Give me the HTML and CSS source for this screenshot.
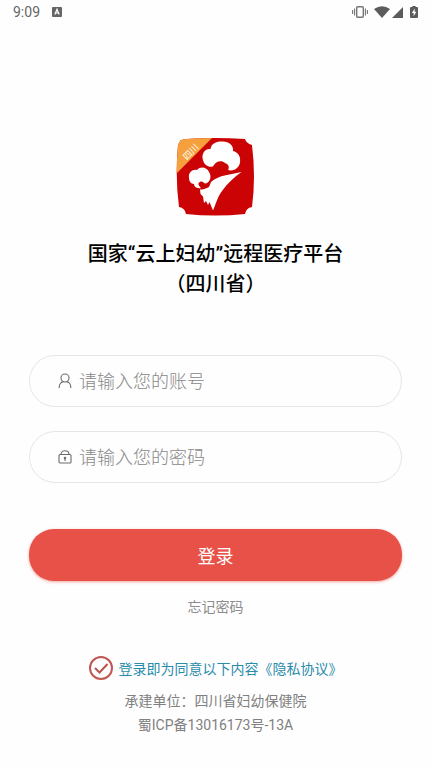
FILE: index.html
```
<!DOCTYPE html>
<html lang="zh-CN">
<head>
    <meta charset="UTF-8">
    <meta name="viewport" content="width=device-width, initial-scale=1.0">
    <title>登录</title>
    <link rel="stylesheet" href="styles.css">
</head>
<body>
    <div class="status-bar">
        <span class="time">9:09</span>
        <svg class="app-icon" width="10" height="10" viewBox="0 0 10 10">
            <rect width="10" height="10" rx="1" fill="#666"/>
            <path d="M2.8 7.6L5 2.4l2.2 5.2M3.6 6h2.8" fill="none" stroke="#fff" stroke-width="1.2"/>
        </svg>
        <div class="status-icons">
            <svg width="16" height="12" viewBox="0 0 16 12" fill="none" stroke="#777">
                <rect x="4.7" y="0.8" width="6.6" height="10.4" rx="1" stroke-width="1.4"/>
                <path d="M2.6 2.5v7M13.4 2.5v7M0.6 4v4M15.4 4v4" stroke-width="1.1"/>
            </svg>
            <svg class="wifi" width="16" height="12" viewBox="0 0 16 12">
                <path d="M0 3Q8-2.6 16 3L8 12z" fill="#5c5c5c"/>
            </svg>
            <svg width="11" height="11" viewBox="0 0 11 11">
                <path d="M11 0v11H0z" fill="#5c5c5c"/>
            </svg>
            <svg class="battery" width="8" height="12" viewBox="0 0 8 12">
                <path d="M2.4 0h3.2v1H7q1 0 1 1v9q0 1-1 1H1q-1 0-1-1V2q0-1 1-1h1.400z" fill="#5c5c5c"/>
                <path d="M4.800 2.600L1.800 7h1.800v3.200L6.400 5.800H4.600z" fill="#fff"/>
            </svg>
        </div>
    </div>

    <main class="container">
        <svg class="logo" width="80" height="80" viewBox="0 0 80 80">
            <defs>
                <clipPath id="badge">
                    <path d="M10 2Q39 0 69 2Q70 6 76 8Q80 40 76 70Q70 71 69 77Q39 80 10 77Q9 71 3 70Q-1 40 2 8Q3 5 5 3z"/>
                </clipPath>
            </defs>
            <g clip-path="url(#badge)">
                <rect width="80" height="80" fill="#cb0304"/>
                <path d="M0 0h37L0 37z" fill="#f5a03c"/>
            </g>
            <text class="logo-text" x="15" y="18" transform="rotate(-45 15 15)" text-anchor="middle">四川</text>
            <g fill="#fff">
                <path d="M27 23C25 17 29 11 34.500 12C35 6 42 4 46 4.500C52 4 58 8 57 14C62 15 65 20 64 25C64 30 58 35 52 33C54 30 52 27 49 26C46 23 40 24 38 28C36 32 28 29 27 23z"/>
                <path d="M13 41C12 35 17 32 21 33C24 29 31 30 33 35C36 40 34 44 31 46C28 48 27 43 24 45C21 46 23 49 25 51C20 52 18 49 18 47C15 47 13 44 13 41z"/>
                <path d="M24 52.500C28 53 31 51 33 50L35 45C38 42 45 39 51 38L65.500 35C58 40 52 46 46 54C41 61 40 67 37 73.500L33.500 65L32 68L30 64L28 66L27 59.500L24.500 57z"/>
            </g>
        </svg>

        <h1>国家“云上妇幼”远程医疗平台<br>（四川省）</h1>

        <form class="login-form">
            <label class="field">
                <svg width="14" height="16" viewBox="0 0 14 16" fill="none" stroke="#6b6b6b" stroke-width="1.100">
                    <circle cx="7" cy="5" r="4"/>
                    <path d="M1.200 15v-1C1.200 11 3.400 8.800 5.400 8.600M12.800 15v-1C12.800 11 10.600 8.800 8.600 8.600"/>
                </svg>
                <input type="text" name="account" placeholder="请输入您的账号" aria-label="账号">
            </label>
            <label class="field">
                <svg width="14" height="16" viewBox="0 0 14 16" fill="none" stroke="#6b6b6b" stroke-width="1.100">
                    <rect x="1" y="5.500" width="12" height="8.500" rx="1"/>
                    <path d="M3 5.500C3 0.500 11 0.500 11 5.500M7 9.500v2.500"/>
                    <circle cx="7" cy="9" r="0.700"/>
                </svg>
                <input type="password" name="password" placeholder="请输入您的密码" aria-label="密码">
            </label>
            <button type="button">登录</button>
            <a class="forgot" href="#">忘记密码</a>
            <div class="agreement">
                <span class="check">
                    <input type="checkbox" id="agree" checked>
                    <svg width="24" height="24" viewBox="0 0 24 24" fill="none">
                        <path d="M6 12l4.500 4.500L18.500 8" stroke="#b9544f" stroke-width="2"/>
                    </svg>
                </span>
                <label for="agree">登录即为同意以下内容</label><a href="#">《隐私协议》</a>
            </div>
        </form>

        <footer>
            <p>承建单位：四川省妇幼保健院</p>
            <p>蜀ICP备13016173号-13A</p>
        </footer>
    </main>
</body>
</html>
```
FILE: styles.css
```
body {
    margin: 0;
    background-color: #fefefe;
    font-family: Roboto, "Noto Sans CJK SC", sans-serif;
    font-size: 14px;
    color: #808080;
}

a {
    text-decoration: none;
}

.status-bar {
    display: flex;
    align-items: center;
    height: 24px;
    padding: 0 13px;
}

.time {
    color: #666;
}

.app-icon {
    margin-left: 12px;
}

.status-icons {
    display: flex;
    align-items: center;
    gap: 2px;
    margin-left: auto;
}

.wifi {
    margin-left: 4px;
}

.battery {
    margin-left: 5px;
}

.container {
    display: flex;
    flex-direction: column;
    align-items: center;
    padding: 113px 29px 24px;
}

.logo-text {
    font-size: 9px;
    fill: #fff;
}

h1 {
    margin: 22px 0 56px;
    font-size: 20px;
    font-weight: 500;
    line-height: 30px;
    text-align: center;
    color: #000;
}

.login-form {
    display: flex;
    flex-direction: column;
    align-items: center;
    width: 100%;
}

.field {
    display: flex;
    align-items: center;
    gap: 7px;
    box-sizing: border-box;
    width: 100%;
    height: 52px;
    margin-bottom: 24px;
    padding: 0 28px;
    border: 1px solid #e6e6e6;
    border-radius: 26px;
}

.field input {
    flex: 1;
    min-width: 0;
    padding: 0;
    border: none;
    outline: none;
    background: none;
    font: inherit;
    font-size: 18px;
    font-weight: 300;
    color: #333;
}

.field input::placeholder {
    color: #888;
}

button {
    width: 100%;
    height: 52px;
    margin-top: 22px;
    border: none;
    border-radius: 25px;
    background-color: #e85147;
    box-shadow: 0 1px 3px rgba(232, 81, 71, 0.5);
    font: inherit;
    font-size: 18px;
    color: #fff;
    cursor: pointer;
}

.forgot {
    margin-top: 16px;
    line-height: 20px;
    color: #8c8c8c;
}

.agreement {
    display: flex;
    align-items: center;
    margin-top: 39px;
    color: #2a8cab;
}

.agreement a {
    color: #2a8cab;
}

.check {
    display: grid;
    margin-right: 6px;
}

.check input,
.check svg {
    grid-area: 1 / 1;
}

.check input {
    appearance: none;
    box-sizing: border-box;
    width: 24px;
    height: 24px;
    margin: 0;
    border: 2px solid #bf5752;
    border-radius: 50%;
}

.check svg {
    pointer-events: none;
}

.check input:not(:checked) + svg {
    visibility: hidden;
}

footer {
    margin-top: 9px;
    line-height: 24px;
    text-align: center;
}

footer p {
    margin: 0;
}
```
